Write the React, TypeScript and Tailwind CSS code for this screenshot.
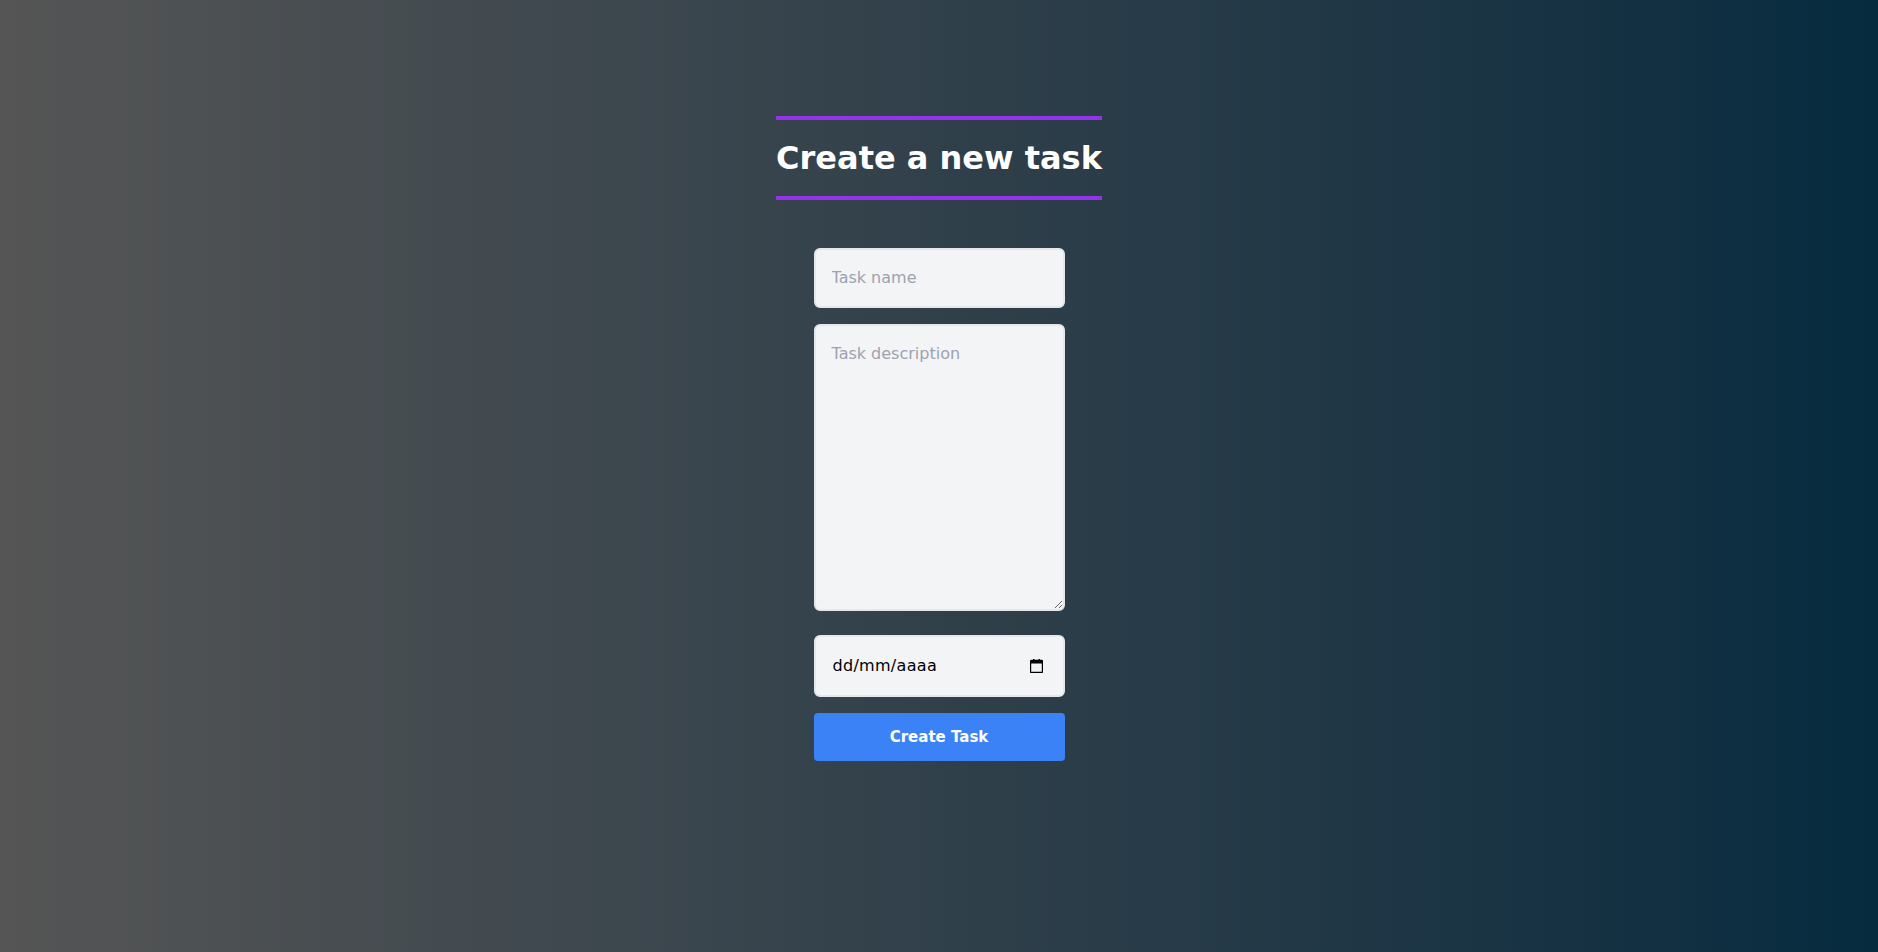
import React from 'react';

const font = { fontFamily: '"DejaVu Sans", Verdana, sans-serif' };

const CalendarIcon = () => (
  <svg width="13" height="14" viewBox="0 0 13 14" className="shrink-0">
    <rect x="0.5" y="1.5" width="12" height="12" rx="1" fill="none" stroke="#000" strokeWidth="1.4" />
    <rect x="0.5" y="1.5" width="12" height="3" fill="#000" />
    <rect x="3" y="0" width="1.5" height="3" fill="#000" />
    <rect x="8.5" y="0" width="1.5" height="3" fill="#000" />
  </svg>
);

const App: React.FC = () => {
  return (
    <div
      className="min-h-screen w-full bg-linear-to-r from-[#555555] to-[#062b3f] flex flex-col items-center pt-[116px] [font-family:'DejaVu_Sans',Verdana,sans-serif]"
    >
      <h1 className="border-y-4 border-[#9333ea] py-5 text-[32px] font-bold leading-9 text-white">
        Create a new task
      </h1>

      <form className="mt-12 flex w-[251px] flex-col" onSubmit={(e) => e.preventDefault()}>
        <input
          type="text"
          placeholder="Task name"
          className="mb-4 block w-full rounded-md border-2 border-[#e5e7eb] bg-[#f3f4f6] p-4 text-base leading-6 text-gray-800 placeholder:text-[#9ca3af] outline-none"
          style={font}
        />
        <textarea
          placeholder="Task description"
          className="mb-6 block h-[287px] w-full rounded-md border-2 border-[#e5e7eb] bg-[#f3f4f6] p-4 text-base leading-6 text-gray-800 placeholder:text-[#9ca3af] outline-none"
          style={font}
        />
        <div className="mb-4 flex h-[62px] w-full items-center justify-between rounded-md border-2 border-[#e5e7eb] bg-[#f3f4f6] pl-[17px] pr-[20px] text-base text-black">
          <span className="tracking-[0.3px]">dd/mm/aaaa</span>
          <CalendarIcon />
        </div>
        <button
          type="submit"
          className="h-12 w-full rounded-sm bg-[#3b82f6] text-[15px] font-bold text-white"
        >
          Create Task
        </button>
      </form>
    </div>
  );
};

export default App;
